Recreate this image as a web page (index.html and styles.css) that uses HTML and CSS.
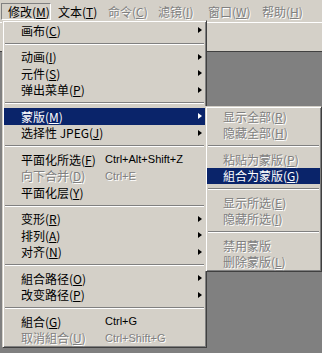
FILE: index.html
```html
<!DOCTYPE html>
<html>
<head>
<meta charset="UTF-8">
<title>修改菜单</title>
<link rel="stylesheet" href="styles.css">
</head>
<body>
<!-- 菜单栏 -->
<div class="menubar">
  <div class="bar-item open">修改(<u>M</u>)</div>
  <div class="bar-item">文本(<u>T</u>)</div>
  <div class="bar-item off">命令(<u>C</u>)</div>
  <div class="bar-item off">滤镜(<u>I</u>)</div>
  <div class="bar-item off wide">窗口(<u>W</u>)</div>
  <div class="bar-item off">帮助(<u>H</u>)</div>
</div>
<div class="toolbar"></div>
<div class="workspace"></div>

<!-- 修改 下拉菜单 -->
<div class="menu main">
  <div class="item"><span class="label">画布(<u>C</u>)</span><span class="arrow"></span></div>
  <div class="sep"></div>
  <div class="item"><span class="label">动画(<u>I</u>)</span><span class="arrow"></span></div>
  <div class="item"><span class="label">元件(<u>S</u>)</span><span class="arrow"></span></div>
  <div class="item"><span class="label">弹出菜单(<u>P</u>)</span><span class="arrow"></span></div>
  <div class="sep"></div>
  <div class="item active"><span class="label">蒙版(<u>M</u>)</span><span class="arrow"></span></div>
  <div class="item"><span class="label">选择性 JPEG(<u>J</u>)</span><span class="arrow"></span></div>
  <div class="sep"></div>
  <div class="item"><span class="label">平面化所选(<u>F</u>)</span><span class="key">Ctrl+Alt+Shift+Z</span></div>
  <div class="item off"><span class="label">向下合并(<u>D</u>)</span><span class="key">Ctrl+E</span></div>
  <div class="item"><span class="label">平面化层(<u>Y</u>)</span></div>
  <div class="sep"></div>
  <div class="item"><span class="label">变形(<u>R</u>)</span><span class="arrow"></span></div>
  <div class="item"><span class="label">排列(<u>A</u>)</span><span class="arrow"></span></div>
  <div class="item"><span class="label">对齐(<u>N</u>)</span><span class="arrow"></span></div>
  <div class="sep"></div>
  <div class="item"><span class="label">組合路径(<u>O</u>)</span><span class="arrow"></span></div>
  <div class="item"><span class="label">改变路径(<u>P</u>)</span><span class="arrow"></span></div>
  <div class="sep"></div>
  <div class="item"><span class="label">組合(<u>G</u>)</span><span class="key">Ctrl+G</span></div>
  <div class="item off"><span class="label">取消組合(<u>U</u>)</span><span class="key">Ctrl+Shift+G</span></div>
</div>

<!-- 蒙版 子菜单 -->
<div class="menu sub">
  <div class="item off">显示全部(<u>R</u>)</div>
  <div class="item off">隐藏全部(<u>H</u>)</div>
  <div class="sep"></div>
  <div class="item off">粘贴为蒙版(<u>P</u>)</div>
  <div class="item active">組合为蒙版(<u>G</u>)</div>
  <div class="sep"></div>
  <div class="item off">显示所选(<u>E</u>)</div>
  <div class="item off">隐藏所选(<u>I</u>)</div>
  <div class="sep"></div>
  <div class="item off">禁用蒙版</div>
  <div class="item off">删除蒙版(<u>L</u>)</div>
</div>
</body>
</html>
```

FILE: styles.css
```css
body {
	margin: 0;
	width: 322px;
	height: 353px;
	overflow: hidden;
	position: relative;
	display: flex;
	flex-direction: column;
	background-color: #d4d0c8;
	color: #000;
	font-family: "Noto Sans CJK SC", "Liberation Sans", sans-serif;
	font-size: 12px;
}
u {
	text-decoration: underline;
	text-underline-offset: 1px;
}
/* 菜单栏 */
.menubar {
	display: flex;
	height: 20px;
	padding-left: 1px;
}
.bar-item {
	box-sizing: border-box;
	width: 50px;
	height: 17px;
	margin-top: 3px;
	padding-left: 7px;
	line-height: 17px;
	white-space: nowrap;
}
.bar-item.wide {
	width: 54px;
}
.bar-item.open {
	padding-left: 6px;
	line-height: 15px;
	border: 1px solid;
	border-color: #808080 #fff #fff #808080;
}
.bar-item.off {
	color: #808080;
	text-shadow: 1px 1px 0 #fff;
}
.toolbar {
	height: 28px;
	margin-top: 2px;
	border-top: 1px solid #fff;
}
.workspace {
	flex: 1;
	border-top: 1px solid #404040;
	background-color: #808080;
}
/* 下拉菜单 */
.menu {
	position: absolute;
	box-sizing: border-box;
	padding: 1px;
	border: 1px solid;
	border-color: #d4d0c8 #404040 #404040 #d4d0c8;
	box-shadow: inset 1px 1px 0 #fff, inset -1px -1px 0 #808080;
	background-color: #d4d0c8;
}
.menu.main {
	left: 2px;
	top: 20px;
	width: 205px;
}
.menu.sub {
	left: 205px;
	top: 106px;
	width: 117px;
}
.item {
	display: flex;
	align-items: center;
	height: 16.5px;
	padding-left: 17px;
	white-space: nowrap;
}
.sub .item {
	padding-left: 16px;
}
.label {
	width: 84px;
}
.key {
	font-family: "Liberation Sans", sans-serif;
	font-size: 11px;
}
.arrow {
	margin-left: auto;
	margin-right: 3px;
	width: 0;
	height: 0;
	border-left: 4px solid #000;
	border-top: 3.5px solid transparent;
	border-bottom: 3.5px solid transparent;
}
.item.active {
	background-color: #0a246a;
	color: #fff;
}
.item.active .arrow {
	border-left-color: #fff;
}
.item.off {
	color: #808080;
	text-shadow: 1px 1px 0 #fff;
}
.sep {
	box-sizing: border-box;
	height: 2px;
	margin: 4px 1px;
	border-top: 1px solid #808080;
	border-bottom: 1px solid #fff;
}
```
